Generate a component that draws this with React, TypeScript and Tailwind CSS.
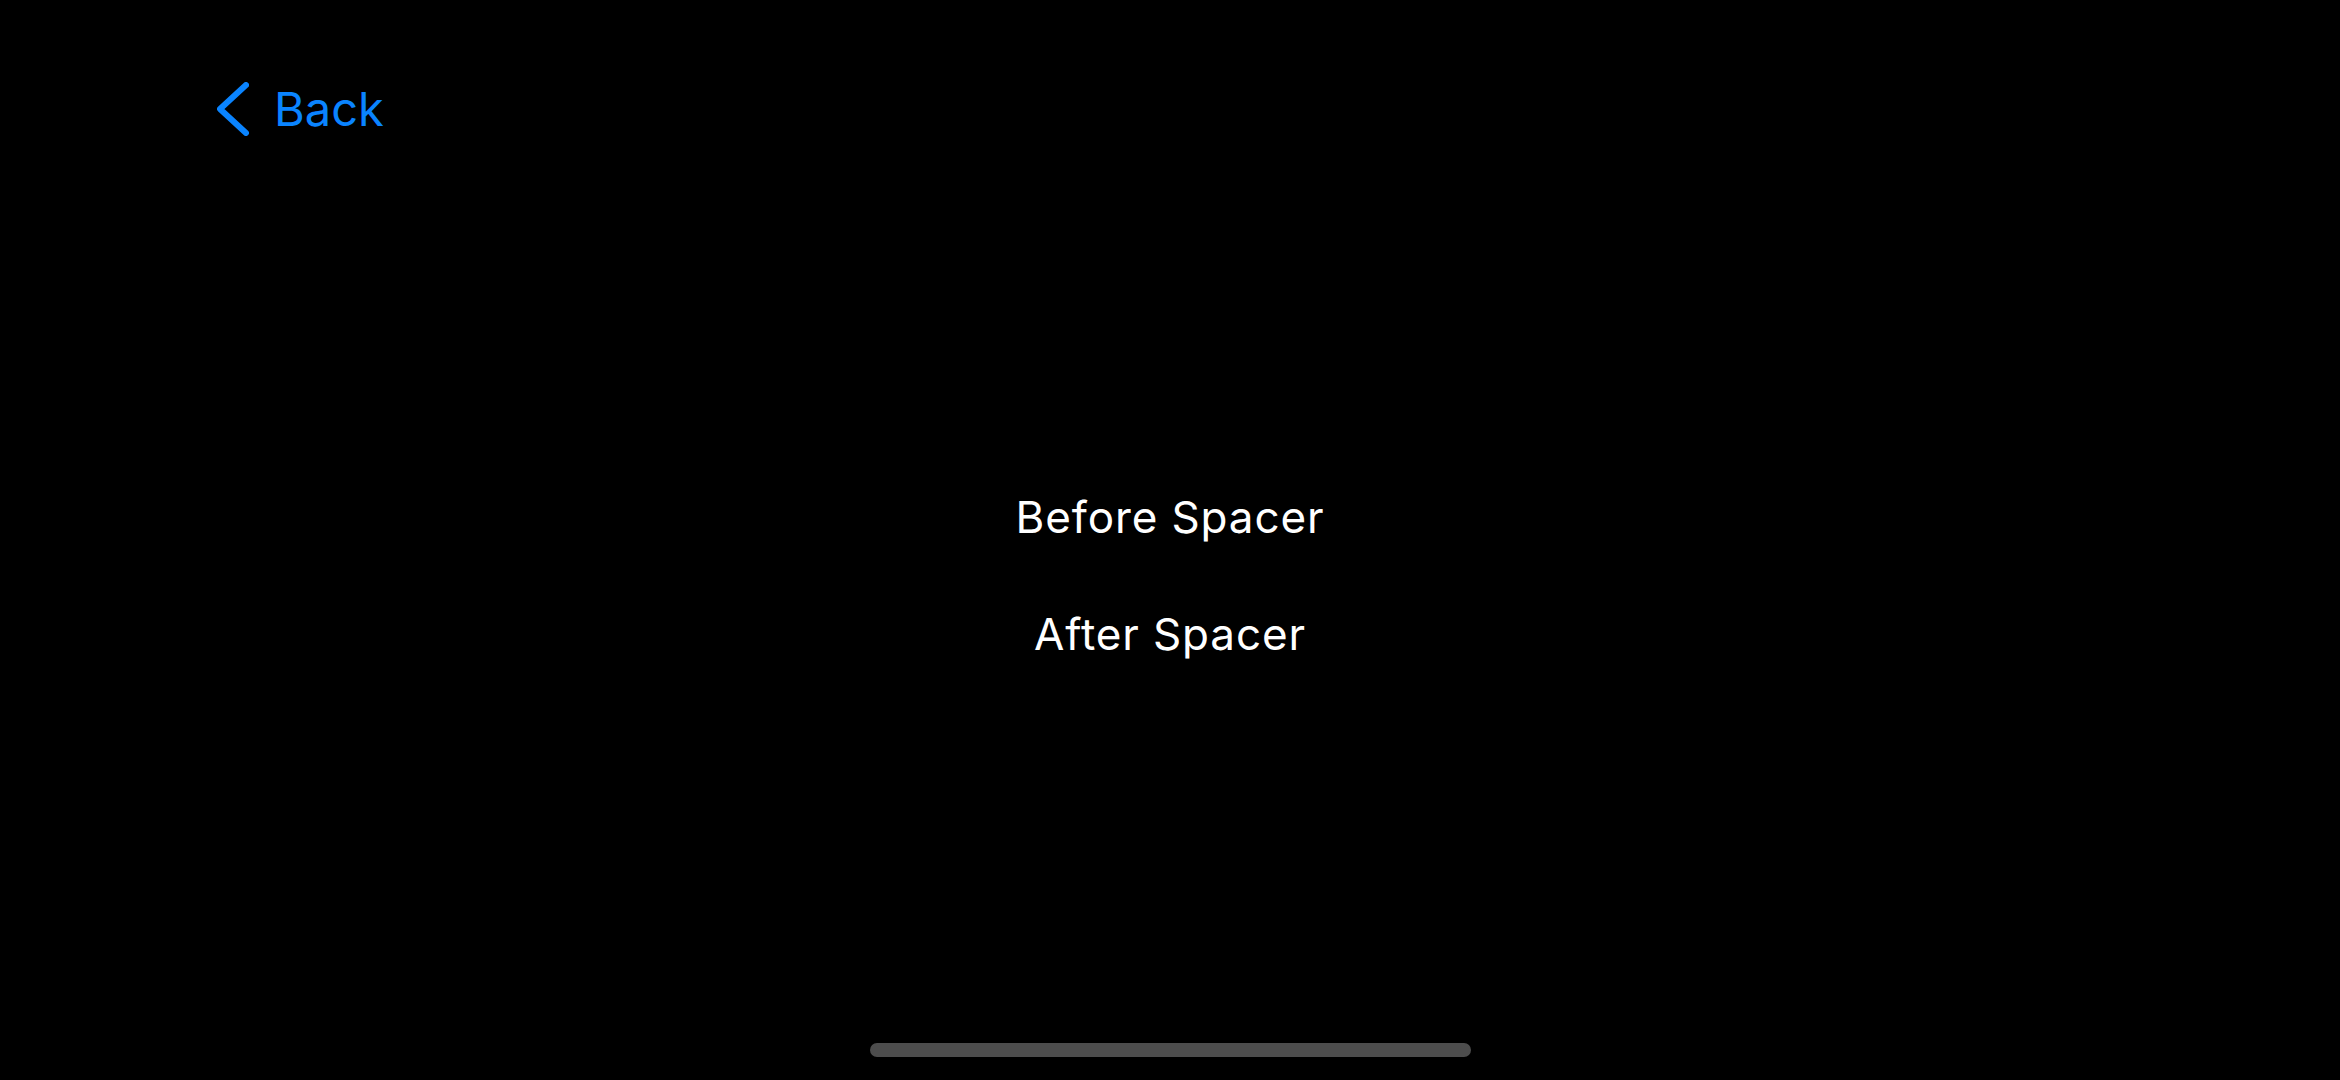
export default function App() {
  return (
    <div className="relative w-[2340px] h-[1080px] bg-black overflow-hidden" style={{ fontFamily: 'Inter, "Noto Sans", sans-serif' }}>
      {/* Nav bar */}
      <div className="flex items-center pl-[217px] pt-[80px]">
        <button className="flex items-center gap-[25px] text-[#0a84ff]">
          <svg width="32" height="54" viewBox="0 0 32 54" fill="none">
            <path d="M29 3 L3 27 L29 51" stroke="#0a84ff" strokeWidth="6" strokeLinecap="round" strokeLinejoin="round" />
          </svg>
          <span className="text-[47px] leading-[57px]">Back</span>
        </button>
      </div>

      {/* Content */}
      <div className="flex flex-col items-center pt-[354px] gap-[64px] text-white">
        <div className="text-[44px] leading-[53px] tracking-[0.02em]">Before Spacer</div>
        <div className="text-[44px] leading-[53px] tracking-[0.02em]">After Spacer</div>
      </div>

      {/* Home indicator */}
      <div className="absolute left-[870px] top-[1043px] w-[601px] h-[14px] rounded-full bg-[#4d4d4d]" />
    </div>
  );
}
